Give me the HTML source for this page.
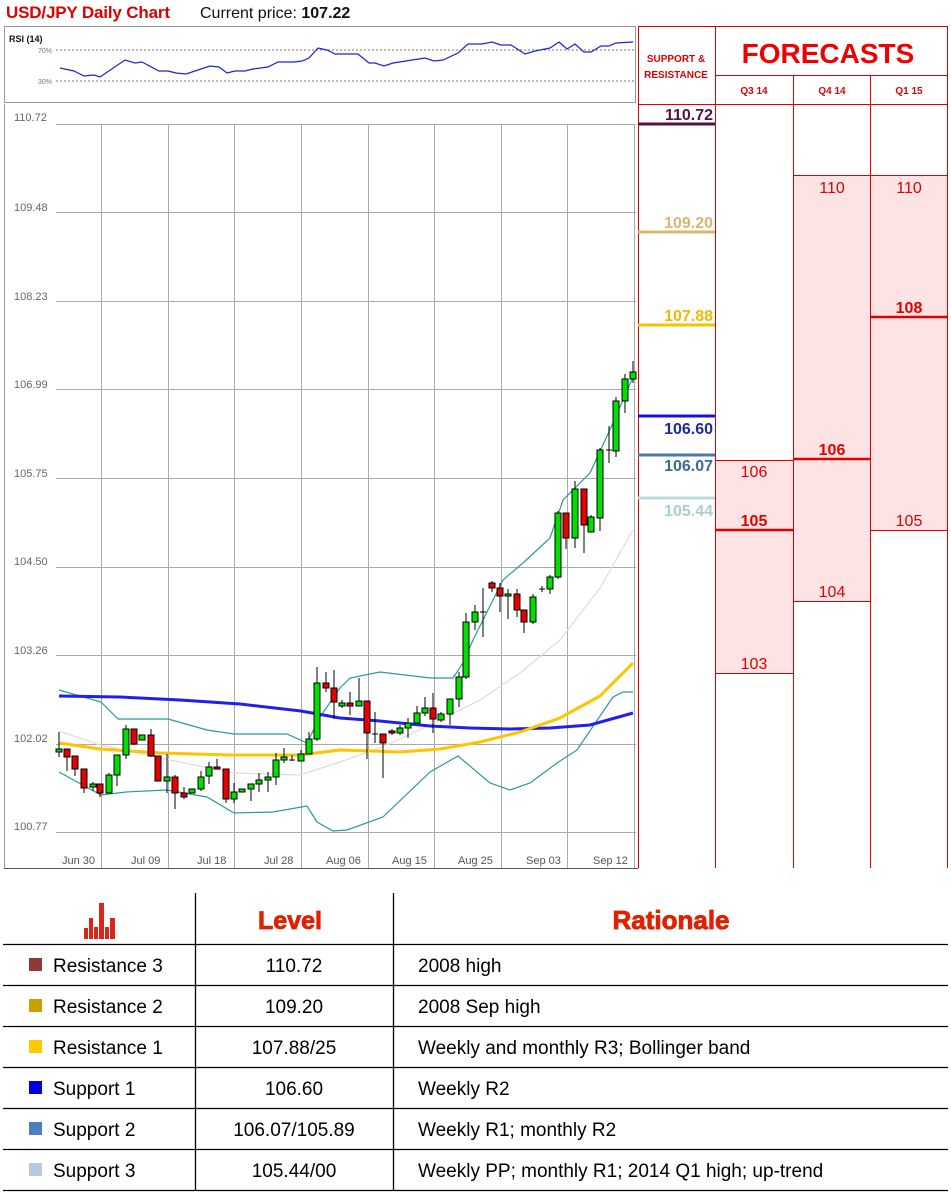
<!DOCTYPE html>
<html><head><meta charset="utf-8"><style>
html,body{margin:0;padding:0;background:#fff;width:951px;height:1194px;overflow:hidden}
svg{display:block}
text{font-family:"Liberation Sans",Arial,sans-serif}
</style></head><body>
<svg width="951" height="1194" viewBox="0 0 951 1194" xmlns="http://www.w3.org/2000/svg">
<text x="6" y="18" font-size="17" font-weight="bold" fill="#e00000" textLength="164">USD/JPY Daily Chart</text>
<text x="200" y="18" font-size="16" fill="#111">Current price: <tspan font-weight="bold">107.22</tspan></text>

<rect x="4.5" y="26.5" width="631" height="76" fill="#fff" stroke="#999"/>
<text x="9" y="42" font-size="9" font-weight="bold" fill="#111">RSI (14)</text>
<text x="38" y="53" font-size="7" fill="#777">70%</text>
<text x="38" y="84" font-size="7" fill="#777">30%</text>
<line x1="56" y1="50" x2="635" y2="50" stroke="#777" stroke-dasharray="2,2"/>
<line x1="56" y1="81" x2="635" y2="81" stroke="#777" stroke-dasharray="2,2"/>
<polyline fill="none" stroke="#2020e0" stroke-width="1.2" points="60,68 74,71 84,76 94,75 100,77 125,60 135,63 142,62 159,71 168,71 176,73 186,74 204,68 210,66 219,67 227,73 235,71 245,71 253,69 268,67 278,62 294,62 302,61 309,58 318,48 327,50 335,54 358,54 369,63 375,63 384,66 393,63 425,58 434,61 443,60 458,53 468,44 482,44 492,42 501,45 511,45 525,54 535,51 550,48 559,42 567,49 575,44 584,52 591,52 601,46 609,46 616,43 633,42"/>

<line x1="4.5" y1="104" x2="4.5" y2="868" stroke="#999"/>
<line x1="4" y1="868.5" x2="638" y2="868.5" stroke="#555"/>
<g stroke="#aaa" stroke-width="1">
<path d="M56 124.5H636M56 212.5H636M56 301.5H636M56 389.5H636M56 478.5H636M56 567.5H636M56 655.5H636M56 744.5H636M56 832.5H636"/>
<path d="M101.5 124V868M168.5 124V868M234.5 124V868M301.5 124V868M368.5 124V868M434.5 124V868M501.5 124V868M567.5 124V868M634.5 124V868"/>
</g>
<g font-size="11" fill="#666">
<text x="14" y="121">110.72</text><text x="14" y="211">109.48</text><text x="14" y="300">108.23</text><text x="14" y="388">106.99</text><text x="14" y="477">105.75</text><text x="14" y="565">104.50</text><text x="14" y="654">103.26</text><text x="14" y="742">102.02</text><text x="14" y="830">100.77</text>
</g>
<g font-size="11" fill="#555">
<text x="62" y="864">Jun 30</text><text x="131" y="864">Jul 09</text><text x="197" y="864">Jul 18</text><text x="264" y="864">Jul 28</text><text x="326" y="864">Aug 06</text><text x="392" y="864">Aug 15</text><text x="458" y="864">Aug 25</text><text x="526" y="864">Sep 03</text><text x="593" y="864">Sep 12</text>
</g>

<polyline fill="none" stroke="#ddd" stroke-width="1.2" points="59,731 100,745 170,760 234,773 300,775 340,762 380,748 430,725 480,700 520,673 560,640 600,588 633,530"/>
<polyline fill="none" stroke="#2a9a9a" stroke-width="1.2" points="59,690 101,702 118,719 168,719 207,730 234,734 287,734 307,743 320,717 340,688 350,678 380,672 430,678 453,678 463,663 473,640 503,580 523,563 550,538 563,500 590,473 613,423 633,377"/>
<polyline fill="none" stroke="#2a9a9a" stroke-width="1.2" points="59,772 101,795 126,792 167,790 207,797 234,813 273,812 307,806 317,822 333,831 347,830 383,817 430,772 458,756 490,783 510,790 530,783 557,763 577,750 613,697 623,692 633,692"/>
<polyline fill="none" stroke="#2020ee" stroke-width="3" points="59,696 120,697 180,700 240,704 301,711 340,718 380,721 430,726 470,728 510,729 550,728 590,725 633,713"/>
<polyline fill="none" stroke="#ffc400" stroke-width="3" points="59,743 100,749 160,753 230,755 300,755 340,750 400,752 440,749 480,742 520,732 560,718 600,696 633,663"/>

<path fill="none" stroke="#000" stroke-width="1" d="M59 732V757M67 749V771M75 756V776M84 769V793M93 782V791M100 784V797M109 773V793M117 755V786M126 725V759M134 729V745M142 735V740M151 729V757M158 756V781M167 754V793M175 775V809M184 787V799M192 789V793M201 771V791M209 762V784M217 759V769M226 769V803M234 783V803M242 789V792M251 784V801M259 773V792M268 772V792M276 753V785M284 748V763M292 755V761M301 750V761M309 732V754M317 667V741M326 672V692M334 670V719M342 700V708M350 692V715M359 678V706M367 701V759M375 712V743M383 734V778M392 729V735M400 725V735M408 718V738M417 706V723M425 697V716M433 693V733M441 712V722M450 699V725M459 672V707M466 613V679M475 605V630M483 588V637M492 581V592M500 583V612M508 589V619M517 589V617M524 610V633M533 594V624M542 586V592M550 575V594M558 511V579M566 513V549M575 481V548M584 489V553M591 515V532M600 448V531M609 426V463M616 397V457M625 374V413M633 361V383M289 760h6M372 734h6M480 612h6M539 589h6M606 450h6"/>
<path fill="#00e000" stroke="#000" stroke-width="1" d="M56 749h6v3h-6zM90 784h6v3h-6zM106 775h6v18h-6zM114 755h6v20h-6zM123 729h6v26h-6zM139 735h6v5h-6zM164 777h6v4h-6zM189 789h6v4h-6zM198 777h6v12h-6zM206 767h6v9h-6zM231 792h6v7h-6zM239 789h6v3h-6zM248 784h6v5h-6zM256 780h6v4h-6zM265 777h6v3h-6zM273 760h6v17h-6zM281 757h6v3h-6zM298 754h6v7h-6zM306 739h6v15h-6zM314 683h6v56h-6zM339 703h6v3h-6zM356 701h6v5h-6zM397 728h6v5h-6zM405 723h6v5h-6zM414 713h6v10h-6zM422 708h6v5h-6zM438 714h6v6h-6zM447 699h6v15h-6zM456 677h6v22h-6zM463 622h6v55h-6zM472 612h6v10h-6zM505 594h6v2h-6zM530 597h6v25h-6zM547 577h6v12h-6zM555 513h6v64h-6zM572 489h6v49h-6zM588 517h6v15h-6zM597 450h6v68h-6zM613 401h6v50h-6zM622 379h6v22h-6zM630 372h6v7h-6z"/>
<path fill="#e80000" stroke="#000" stroke-width="1" d="M64 749h6v8h-6zM72 756h6v13h-6zM81 769h6v19h-6zM97 784h6v9h-6zM131 729h6v15h-6zM148 735h6v21h-6zM155 756h6v25h-6zM172 777h6v16h-6zM181 793h6v4h-6zM214 767h6v2h-6zM223 769h6v30h-6zM323 683h6v5h-6zM331 688h6v14h-6zM347 703h6v3h-6zM364 701h6v32h-6zM380 734h6v9h-6zM389 731h6v2h-6zM430 708h6v11h-6zM489 583h6v5h-6zM497 588h6v8h-6zM514 594h6v16h-6zM521 610h6v12h-6zM563 513h6v25h-6zM581 489h6v36h-6z"/>

<rect x="716" y="460" width="77" height="213" fill="#fde3e3"/>
<rect x="793" y="175" width="77" height="426" fill="#fde3e3"/>
<rect x="870" y="175" width="77" height="355" fill="#fde3e3"/>
<g stroke="#e00000" stroke-width="1" fill="none">
<path d="M638.5 26V868M715.5 26V868M793.5 75V868M870.5 75V868M947.5 26V868M638 26.5H948M715 75.5H948M638 104.5H948"/>
<path d="M716 460.5H793M716 673.5H793M793 175.5H948M793 601.5H870M870 530.5H948"/>
</g>
<g stroke="#e00000" stroke-width="2.5">
<path d="M716 530H793M793 459H870M870 317H948"/>
</g>
<text x="676" y="62" font-size="10" font-weight="bold" fill="#e00000" text-anchor="middle">SUPPORT &amp;</text>
<text x="676" y="78" font-size="10" font-weight="bold" fill="#e00000" text-anchor="middle">RESISTANCE</text>
<text x="828" y="63" font-size="28" font-weight="bold" fill="#f00000" text-anchor="middle">FORECASTS</text>
<g font-size="10" font-weight="bold" fill="#e00000" text-anchor="middle">
<text x="754" y="94">Q3 14</text><text x="832" y="94">Q4 14</text><text x="909" y="94">Q1 15</text>
</g>
<g font-size="16" fill="#e00000" text-anchor="middle">
<text x="754" y="477">106</text><text x="754" y="526" font-weight="bold">105</text><text x="754" y="669">103</text>
<text x="832" y="193">110</text><text x="832" y="455" font-weight="bold">106</text><text x="832" y="597">104</text>
<text x="909" y="193">110</text><text x="909" y="313" font-weight="bold">108</text><text x="909" y="526">105</text>
</g>
<g stroke-width="3">
<line x1="638" y1="124" x2="715" y2="124" stroke="#5a1040"/>
<line x1="638" y1="232" x2="715" y2="232" stroke="#d8b870"/>
<line x1="638" y1="325" x2="715" y2="325" stroke="#f8c000"/>
<line x1="638" y1="416" x2="715" y2="416" stroke="#1010e0"/>
<line x1="638" y1="455" x2="715" y2="455" stroke="#4a7aaa"/>
<line x1="638" y1="498" x2="715" y2="498" stroke="#b8dcdc"/>
</g>
<g font-size="16" font-weight="bold" text-anchor="end">
<text x="713" y="120" fill="#5a1040">110.72</text>
<text x="713" y="228" fill="#d8b870">109.20</text>
<text x="713" y="321" fill="#f0b800">107.88</text>
<text x="713" y="434" fill="#1a2aa0">106.60</text>
<text x="713" y="471" fill="#3a6a9a">106.07</text>
<text x="713" y="516" fill="#a8d0d0">105.44</text>
</g>

<g fill="#d8261a">
<rect x="84" y="928" width="4" height="11"/><rect x="89" y="918" width="4" height="21"/><rect x="94" y="927" width="4" height="12"/><rect x="99" y="903" width="5" height="36"/><rect x="105" y="927" width="4" height="12"/><rect x="110" y="918" width="5" height="21"/>
</g>
<text x="290" y="929" font-size="25" font-weight="bold" fill="#e02000" text-anchor="middle" stroke="#e02000" stroke-width="0.8">Level</text>
<text x="671" y="929" font-size="26" font-weight="bold" fill="#e02000" text-anchor="middle" stroke="#e02000" stroke-width="0.8">Rationale</text>
<g stroke="#000" stroke-width="1.3">
<path d="M195.5 893V1190M393.5 893V1190M3 944.5H948M3 985.5H948M3 1026.5H948M3 1067.5H948M3 1108.5H948M3 1149.5H948M3 1190.5H948"/>
</g>
<rect x="29" y="958" width="13" height="13" fill="#8e3a3a"/>
<rect x="29" y="999" width="13" height="13" fill="#c8a000"/>
<rect x="29" y="1040" width="13" height="13" fill="#ffc800"/>
<rect x="29" y="1081" width="13" height="13" fill="#0000e0"/>
<rect x="29" y="1122" width="13" height="13" fill="#4a80c0"/>
<rect x="29" y="1163" width="13" height="13" fill="#b8c8e0"/>
<g font-size="19" fill="#000">
<text x="53" y="972">Resistance 3</text><text x="294" y="972" text-anchor="middle">110.72</text><text x="418" y="972">2008 high</text>
<text x="53" y="1013">Resistance 2</text><text x="294" y="1013" text-anchor="middle">109.20</text><text x="418" y="1013">2008 Sep high</text>
<text x="53" y="1054">Resistance 1</text><text x="294" y="1054" text-anchor="middle">107.88/25</text><text x="418" y="1054">Weekly and monthly R3; Bollinger band</text>
<text x="53" y="1095">Support 1</text><text x="294" y="1095" text-anchor="middle">106.60</text><text x="418" y="1095">Weekly R2</text>
<text x="53" y="1136">Support 2</text><text x="294" y="1136" text-anchor="middle">106.07/105.89</text><text x="418" y="1136">Weekly R1; monthly R2</text>
<text x="53" y="1177">Support 3</text><text x="294" y="1177" text-anchor="middle">105.44/00</text><text x="418" y="1177">Weekly PP; monthly R1; 2014 Q1 high; up-trend</text>
</g>
</svg>
</body></html>
